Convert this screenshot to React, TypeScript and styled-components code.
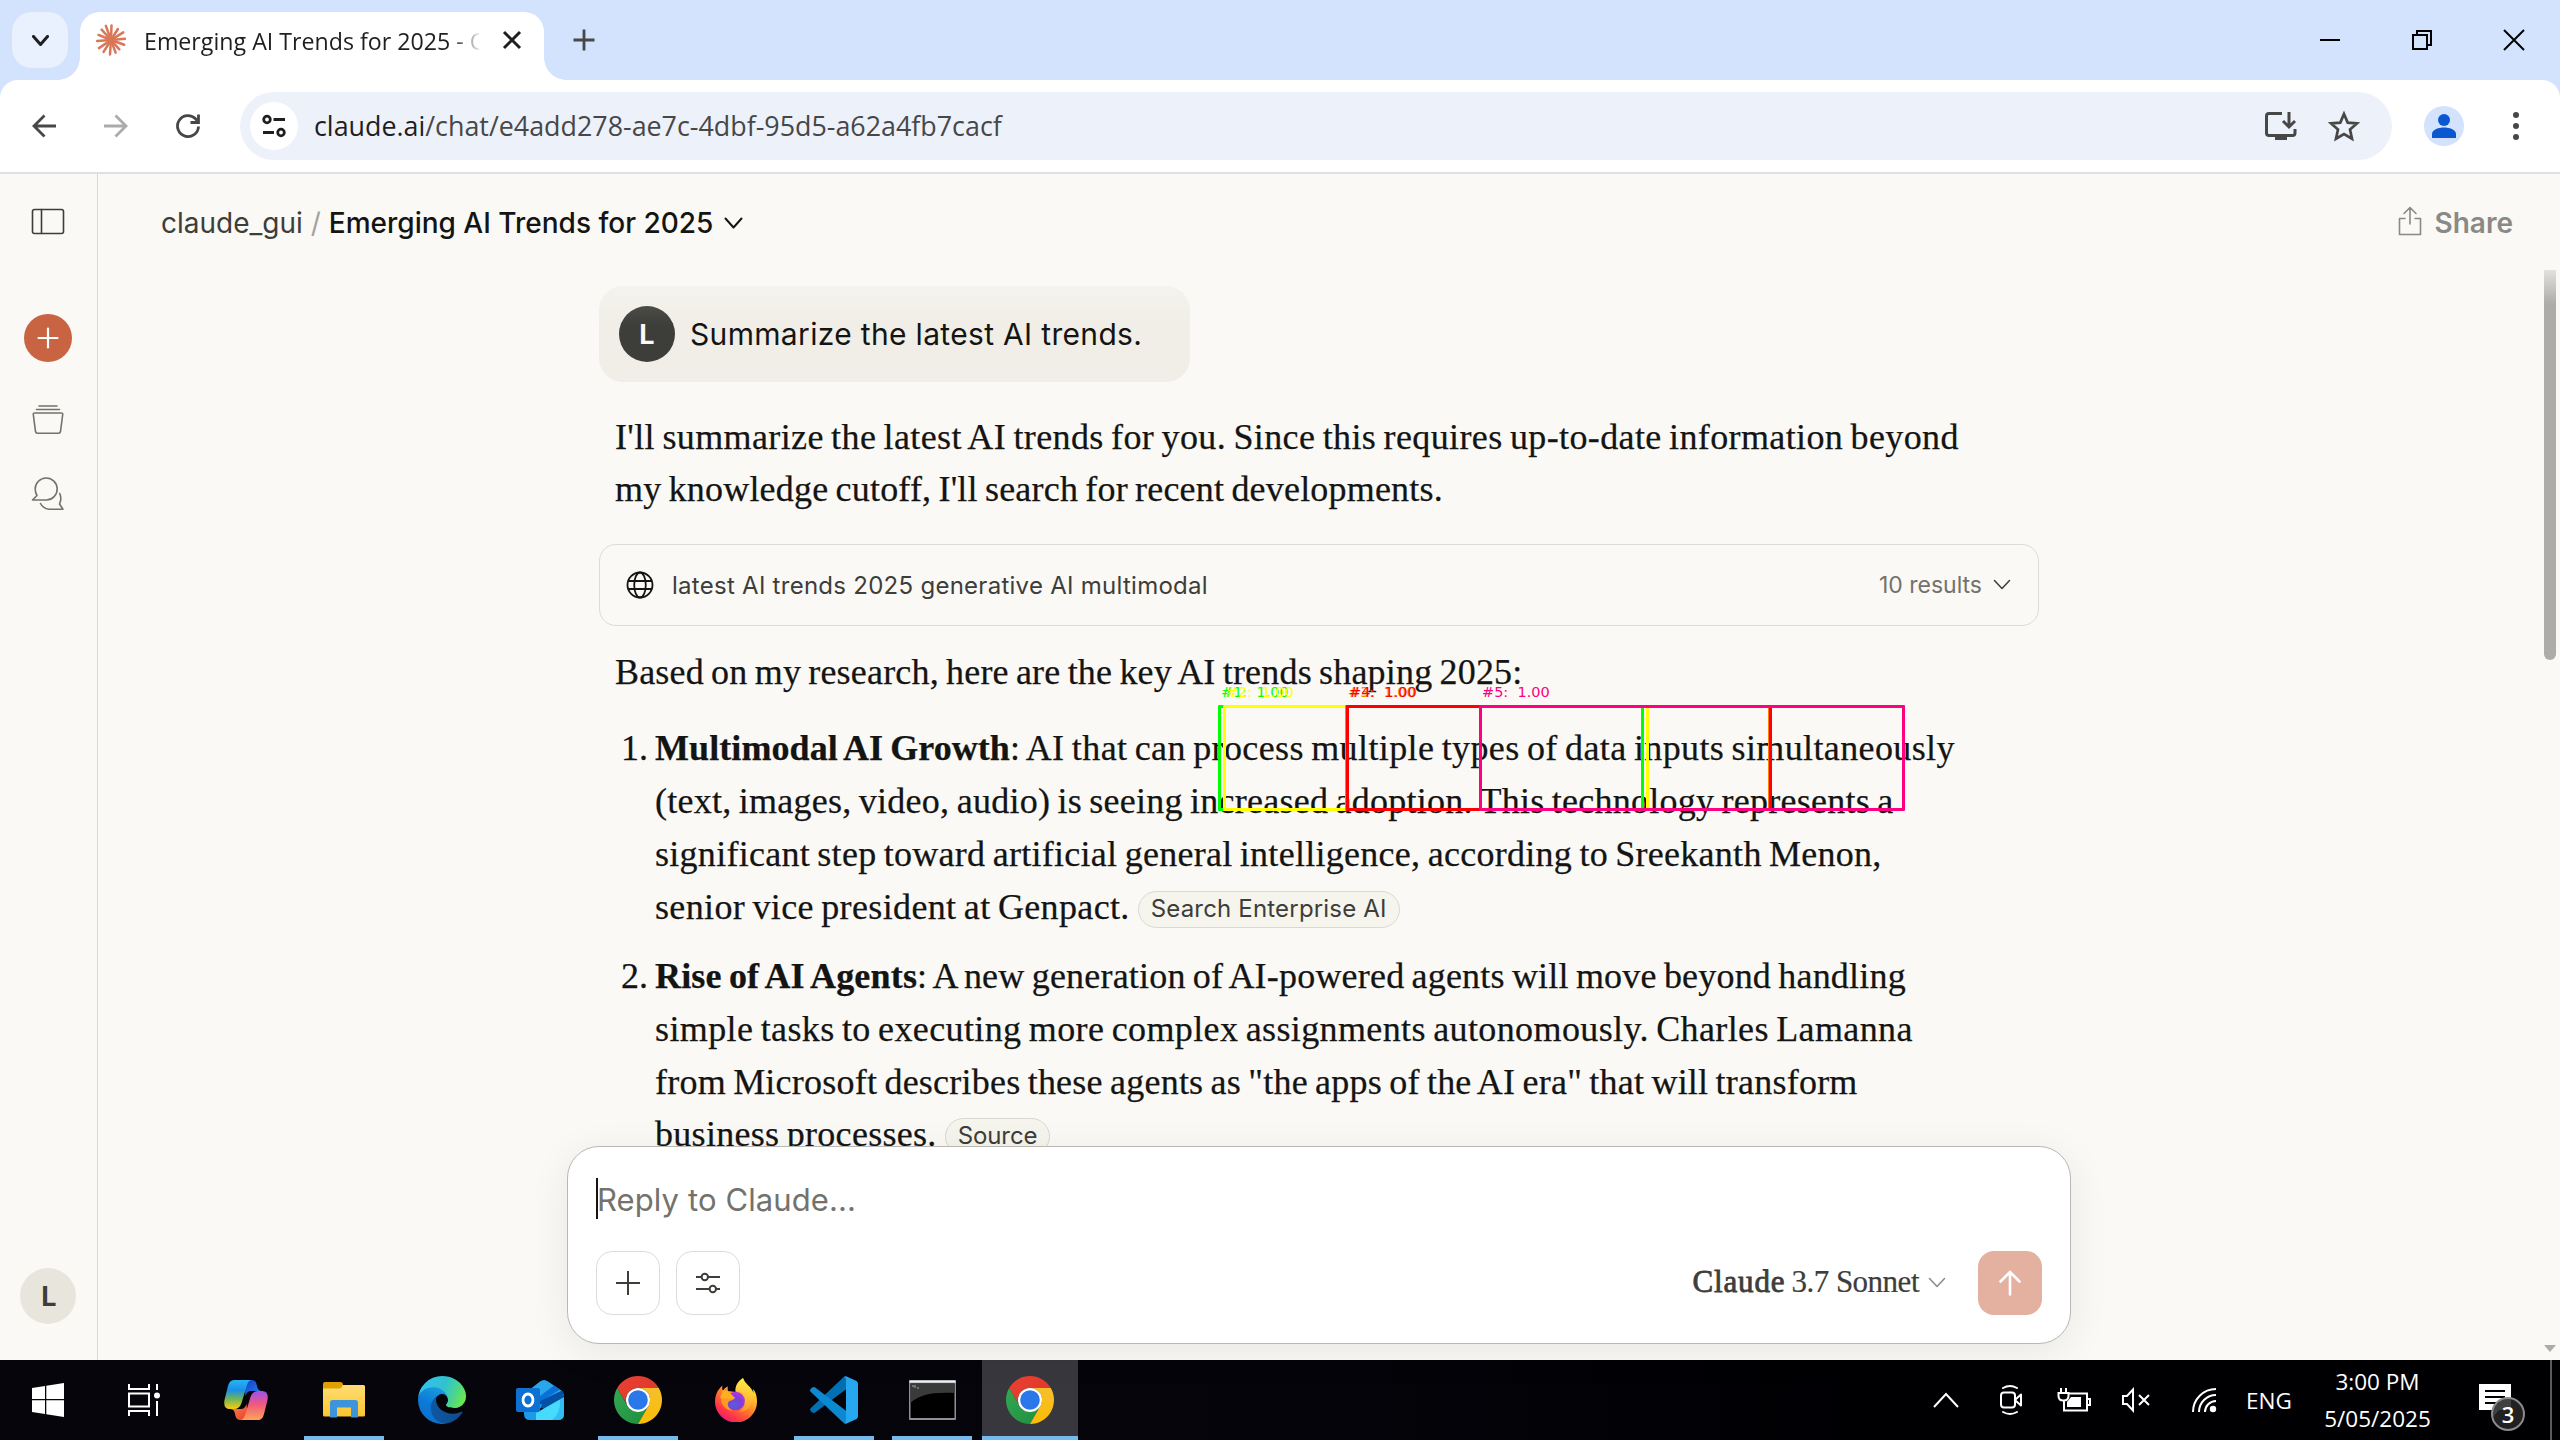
import React from 'react';
import styled, { createGlobalStyle, css } from 'styled-components';

const SANS = `Inter, "Liberation Sans", sans-serif`;
const SERIF = `"Liberation Serif", serif`;
const SYSTEM = `"Open Sans", "Noto Sans", sans-serif`;

const GlobalStyle = createGlobalStyle`
  *, *::before, *::after { box-sizing: border-box; }
  html, body { margin: 0; padding: 0; overflow: hidden; }
  svg { display: block; flex: none; }
`;

const Screen = styled.div`
  position: relative;
  width: 2560px;
  height: 1440px;
  display: grid;
  grid-template-rows: 80px 94px minmax(0, 1fr) 80px;
  overflow: hidden;
  background: #faf9f5;
  font-family: ${SANS};
`;

/* ---------- browser tab strip ---------- */

const TabStrip = styled.header`
  display: flex;
  align-items: flex-start;
  padding: 12px 0 0 12px;
  background: #d3e3fd;
`;

const TabSearch = styled.button`
  display: grid;
  place-items: center;
  width: 56px;
  height: 56px;
  padding: 0;
  border: 0;
  border-radius: 20px;
  background: #e9f1fe;
`;

const Tab = styled.div`
  position: relative;
  display: flex;
  align-items: center;
  width: 464px;
  height: 68px;
  margin-left: 12px;
  padding: 0 22px 12px 15px;
  border-radius: 20px 20px 0 0;
  background: #fff;

  &::before,
  &::after {
    content: '';
    position: absolute;
    bottom: 0;
    width: 22px;
    height: 22px;
  }
  &::before {
    left: -22px;
    background: radial-gradient(circle at 0 0, transparent 21.5px, #fff 22px);
  }
  &::after {
    right: -22px;
    background: radial-gradient(circle at 100% 0, transparent 21.5px, #fff 22px);
  }
`;

const TabTitle = styled.span`
  width: 335px;
  margin: 1px 0 0 17px;
  overflow: hidden;
  white-space: nowrap;
  font: 400 23.2px/32px ${SYSTEM};
  color: #1f1f1f;
  mask-image: linear-gradient(90deg, #000 308px, transparent 338px);
`;

const TabClose = styled.span`
  margin-left: auto;
`;

const NewTab = styled.span`
  margin: 16px 0 0 28px;
`;

const WindowControls = styled.div`
  display: flex;
  gap: 68px;
  margin: 16px 34px 0 auto;
`;

/* ---------- browser toolbar ---------- */

const ToolbarBack = styled.div`
  background: #d3e3fd;
`;

const Toolbar = styled.div`
  display: flex;
  align-items: center;
  height: 94px;
  padding: 0 28px;
  border-bottom: 2px solid #e0e0e0;
  border-radius: 18px 18px 0 0;
  background: #fff;
`;

const NavButtons = styled.nav`
  display: flex;
  gap: 40px;
  width: 212px;
`;

const Omnibox = styled.div`
  display: flex;
  align-items: center;
  width: 2152px;
  height: 68px;
  padding: 0 30px 0 10px;
  border-radius: 34px;
  background: #ecf1fa;
`;

const SiteInfo = styled.div`
  display: grid;
  place-items: center;
  width: 48px;
  height: 48px;
  border-radius: 50%;
  background: #fff;
`;

const Url = styled.div`
  flex: 1;
  margin-left: 16px;
  font: 400 26.85px/40px ${SYSTEM};
  color: #474747;
  b { font-weight: 400; color: #1f1f1f; }
`;

const OmniActions = styled.div`
  display: flex;
  align-items: center;
  gap: 28px;
`;

const Profile = styled.div`
  display: grid;
  place-items: center;
  width: 40px;
  height: 40px;
  margin-left: 32px;
  border-radius: 50%;
  background: #d3e3fd;
`;

const Kebab = styled.div`
  display: grid;
  gap: 5px;
  margin-left: 49px;
  i { width: 6px; height: 6px; border-radius: 50%; background: #474747; }
`;

/* ---------- page shell ---------- */

const Page = styled.div`
  display: grid;
  grid-template-columns: 98px minmax(0, 1fr) 20px;
  min-height: 0;
  background: #faf9f5;
`;

const Rail = styled.aside`
  display: flex;
  flex-direction: column;
  align-items: center;
  padding: 33px 1px 36px 0;
  border-right: 1px solid #d9d8d3;
`;

const NewChat = styled.button`
  display: grid;
  place-items: center;
  width: 48px;
  height: 48px;
  margin: 77px 0 39px;
  padding: 0;
  border: 0;
  border-radius: 50%;
  background: #c96442;
`;

const RailIcon = styled.div`
  margin-bottom: 40px;
`;

const Avatar = styled.div<{ $dark?: boolean }>`
  display: grid;
  place-items: center;
  flex: none;
  width: 56px;
  height: 56px;
  border-radius: 50%;
  font: 700 27px/1 ${SANS};
  ${(p) => p.$dark
    ? css`background: linear-gradient(#4b4b47, #3d3d3a 35%); color: #faf9f5;`
    : css`background: #e8e6dc; color: #3d3d3a; margin-top: auto; padding-left: 2px;`}
`;

const Main = styled.main`
  display: flex;
  flex-direction: column;
  align-items: center;
  min-height: 0;
`;

const ChatHeader = styled.div`
  display: flex;
  align-items: center;
  align-self: stretch;
  height: 98px;
  flex: none;
  padding: 0 27px 0 63px;
  font: 400 28px/34px ${SANS};
`;

const Project = styled.span`color: #3d3d3a;`;
const Slash = styled.span`
  width: 26px;
  text-align: center;
  color: #a3a29d;
`;
const Title = styled.span`
  margin-right: 11px;
  font-weight: 500;
  color: #141413;
`;

const Share = styled.div`
  display: flex;
  align-items: center;
  gap: 13px;
  margin-left: auto;
  font-weight: 600;
  color: #8a8985;
  svg { margin-top: -4px; }
`;

const Conversation = styled.section`
  width: 1440px;
  flex: 1;
  min-height: 0;
  padding-top: 14px;
  overflow: hidden;
`;

const Prompt = styled.div`
  display: flex;
  align-items: center;
  gap: 15px;
  width: 591px;
  height: 96px;
  padding: 0 20px;
  border-radius: 24px;
  background: linear-gradient(#f4f3ed, #f0eee6 40%);
  font: 400 30px/40px ${SANS};
  letter-spacing: 0.33px;
  color: #141413;
`;

const Prose = styled.div<{ $top: number }>`
  margin-top: ${(p) => p.$top}px;
  padding-left: 16px;
  font: 400 36px/52.8px ${SERIF};
  word-spacing: -2px;
  color: #141413;
  -webkit-text-stroke: 0.25px #141413;
`;

const Line = styled.div<{ $ls?: number }>`
  white-space: nowrap;
  letter-spacing: ${(p) => p.$ls ?? 0}px;
`;

const Strong = styled.strong<{ $ls: number }>`
  font-weight: 700;
  letter-spacing: ${(p) => p.$ls}px;
`;

const SearchCard = styled.div`
  display: flex;
  align-items: center;
  height: 82px;
  margin-top: 27.5px;
  padding: 0 27px 0 26px;
  border: 1px solid #dcdbd6;
  border-radius: 17px;
`;

const Query = styled.span`
  flex: 1;
  margin: 2px 0 0 18px;
  font: 400 24px/32px ${SANS};
  letter-spacing: 0.27px;
  color: #3d3d3a;
`;

const ResultCount = styled.span`
  margin: 0 11px 0 0;
  font: 400 23px/32px ${SANS};
  color: #73726c;
`;

const Item = styled.div<{ $top: number }>`
  display: grid;
  grid-template-columns: 33px 1fr;
  column-gap: 7px;
  margin-top: ${(p) => p.$top}px;
`;

const Marker = styled.span`text-align: right;`;

const Chip = styled.span<{ $ls: number }>`
  display: inline-block;
  height: 37px;
  margin-left: 8px;
  padding: 0 12px;
  border: 1px solid #dad9d1;
  border-radius: 19px;
  background: #f5f4ed;
  font: 400 24px/34px ${SANS};
  letter-spacing: ${(p) => p.$ls}px;
  word-spacing: 0;
  vertical-align: 2px;
  color: #3d3d3a;
  -webkit-text-stroke: 0;
`;

/* ---------- composer ---------- */

const Composer = styled.form`
  position: relative;
  z-index: 1;
  display: flex;
  flex-direction: column;
  justify-content: space-between;
  flex: none;
  width: 1504px;
  height: 198px;
  margin-bottom: 16px;
  padding: 31px 28px 28px;
  border: 1px solid #b9b8b5;
  border-radius: 32px;
  background: #fff;
  box-shadow: 0 8px 40px rgba(0, 0, 0, 0.075);
`;

const Placeholder = styled.div`
  width: fit-content;
  height: 41px;
  border-left: 2px solid #141413;
  font: 400 31px/43px ${SANS};
  letter-spacing: 0.1px;
  text-indent: -1px;
  color: #73726c;
`;

const ComposerRow = styled.div`
  display: flex;
  align-items: center;
  gap: 16px;
`;

const ToolButton = styled.button`
  display: grid;
  place-items: center;
  width: 64px;
  height: 64px;
  padding: 0;
  border: 1px solid #dddcd9;
  border-radius: 16px;
  background: #fff;
`;

const Model = styled.div`
  display: flex;
  align-items: center;
  margin: -2px 16px 0 auto;
  font: 400 31px/40px ${SERIF};
  color: #3d3d3a;
`;

const ModelBrand = styled.span`
  margin-right: 6px;
  letter-spacing: 0.85px;
  -webkit-text-stroke: 0.8px #3d3d3a;
`;

const ModelVersion = styled.span`
  margin-right: 9px;
  letter-spacing: -0.5px;
  -webkit-text-stroke: 0.2px #3d3d3a;
`;

const Send = styled.button`
  display: grid;
  place-items: center;
  width: 64px;
  height: 64px;
  padding: 0;
  border: 0;
  border-radius: 16px;
  background: #e4b0a0;
`;

/* ---------- scrollbar ---------- */

const Scrollbar = styled.div`
  display: flex;
  flex-direction: column;
  justify-content: space-between;
  padding: 96px 4px 8px;
`;

const Thumb = styled.div`
  height: 390px;
  border-radius: 0 0 6px 6px;
  background: linear-gradient(#e2e1dd, #adaca8 34px);
`;

/* ---------- detection overlay ---------- */

const Detection = styled.div<{ $x: number; $color: string }>`
  position: absolute;
  z-index: 2;
  top: 705px;
  left: ${(p) => p.$x}px;
  width: 426px;
  height: 106px;
  border: 3px solid ${(p) => p.$color};
  border-radius: 1px;
`;

const DetectionLabel = styled.span<{ $x: number; $color: string }>`
  position: absolute;
  z-index: 2;
  top: 683px;
  left: ${(p) => p.$x + 3}px;
  white-space: pre;
  font: 400 14.5px/18px "DejaVu Sans", sans-serif;
  color: ${(p) => p.$color};
`;

/* ---------- taskbar ---------- */

const Taskbar = styled.footer`
  display: flex;
  background: linear-gradient(90deg, #06050b, #05040a 50%, #000003 75%);
`;

const Apps = styled.div`
  display: flex;
  gap: 2px;
  margin-left: 6px;
`;

const AppCell = styled.div<{ $open?: boolean; $active?: boolean }>`
  display: grid;
  grid-template-rows: 76px 4px;
  place-items: center;
  width: 96px;
  background: ${(p) => (p.$active ? '#38373d' : 'transparent')};

  &::after {
    content: '';
    width: ${(p) => (p.$active ? 96 : 80)}px;
    height: 4px;
    background: ${(p) => (p.$open || p.$active ? '#76b9ed' : 'transparent')};
  }
  svg { margin-top: 4px; }
`;

const Tray = styled.div`
  display: flex;
  align-items: center;
  margin-left: auto;
  color: #fff;
  font: 400 22.5px/37px ${SYSTEM};
`;

const TrayItem = styled.div<{ $w: number }>`
  display: grid;
  place-items: center;
  width: ${(p) => p.$w}px;
  text-align: center;
`;

const Notifications = styled.div`
  position: relative;
  width: 74px;
  height: 80px;
  padding: 24px 0 0 1px;
  border-right: 2px solid #5a5a5a;
`;

const Count = styled.span`
  position: absolute;
  top: 37px;
  left: 13px;
  display: grid;
  place-items: center;
  width: 34px;
  height: 34px;
  border: 2px solid #8b8b8b;
  border-radius: 50%;
  background: rgba(38, 38, 38, 0.88);
  font: 600 22px/1 ${SYSTEM};
`;

const PeekEdge = styled.div`width: 8px;`;

/* ---------- icons ---------- */

type StrokeProps = { w: number; h: number; color?: string; sw?: number; round?: boolean; children: React.ReactNode };
const Stroke = ({ w, h, color = '#3d3d3a', sw = 2, round, children }: StrokeProps) => (
  <svg width={w} height={h} viewBox={`0 0 ${w} ${h}`} fill="none" stroke={color} strokeWidth={sw}
    strokeLinecap={round ? 'round' : 'butt'} strokeLinejoin={round ? 'round' : 'miter'}>{children}</svg>
);

const Burst = () => (
  <svg width="32" height="32" viewBox="-16 -16 32 32" stroke="#d97757" strokeWidth="2.5" strokeLinecap="round">
    {[[2, 14.5], [32, 13], [58, 14.5], [85, 14], [110, 14], [138, 12.5], [160, 13.5], [184, 14.5], [212, 14], [236, 14.5], [266, 14], [292, 13.5], [318, 14], [340, 15]].map(([a, r]) => (
      <line key={a} x1="0" y1="0" x2={Math.sin((a * Math.PI) / 180) * r} y2={-Math.cos((a * Math.PI) / 180) * r} />
    ))}
  </svg>
);

const Chevron = ({ w, h, color, sw }: { w: number; h: number; color: string; sw: number }) => (
  <Stroke w={w} h={h} color={color} sw={sw} round><path d={`M1.5 1.5 ${w / 2} ${h - 1.5} ${w - 1.5} 1.5`} /></Stroke>
);

const ChromeLogo = () => (
  <svg width="48" height="48" viewBox="0 0 48 48">
    <defs>
      <linearGradient id="cr" x1="0" y1="0" x2="1" y2="1"><stop stopColor="#ea4335" /><stop offset="1" stopColor="#dc3226" /></linearGradient>
      <linearGradient id="cg" x1="0" y1="0" x2="1" y2="1"><stop stopColor="#34a853" /><stop offset="1" stopColor="#1e8e3e" /></linearGradient>
      <linearGradient id="cy" x1="0" y1="0" x2="0" y2="1"><stop stopColor="#f5bf2c" /><stop offset="1" stopColor="#fbbc04" /></linearGradient>
    </defs>
    <path fill="url(#cr)" d="M24 12H44.78A24 24 0 0 0 3.215 12L13.6 30A12 12 0 0 1 24 12Z" />
    <path fill="url(#cg)" d="M13.608 30 3.218 12A24 24 0 0 0 24 48L34.398 30A12 12 0 0 1 13.608 30Z" />
    <path fill="url(#cy)" d="M34.39 30 24 48A24 24 0 0 0 44.78 12H24A12 12 0 0 1 34.39 30Z" />
    <circle cx="24" cy="24" r="12" fill="#fff" />
    <circle cx="24" cy="24" r="9.8" fill="#2a77ea" />
  </svg>
);

const EdgeLogo = () => (
  <svg width="48" height="48" viewBox="0 0 256 256">
    <defs>
      <linearGradient id="e1" x1="0" x2="1"><stop stopColor="#0c59a4" /><stop offset="1" stopColor="#114a8b" /></linearGradient>
      <linearGradient id="e2" x1=".6" y1="0" x2=".3" y2="1"><stop stopColor="#1b9de2" /><stop offset=".5" stopColor="#0b7ad6" /><stop offset="1" stopColor="#0a6fd0" /></linearGradient>
      <linearGradient id="e3" x1="0" y1=".3" x2="1" y2=".6"><stop stopColor="#35c1f1" /><stop offset=".5" stopColor="#2fc2cf" /><stop offset=".8" stopColor="#4fd787" /><stop offset="1" stopColor="#6be94e" /></linearGradient>
    </defs>
    <path fill="url(#e1)" d="M231 190.5c-3.4 1.8-6.9 3.4-10.5 4.7a101.9 101.9 0 0 1-35.9 6.4c-47.3 0-88.5-32.5-88.5-74.3 0-11.4 6.4-21.9 16.4-27.3-42.8 1.8-53.8 46.4-53.8 72.5 0 73.9 68.1 81.4 82.8 81.4 7.9 0 19.8-2.3 27-4.6l1.3-.4a128.3 128.3 0 0 0 66.6-52.8 4 4 0 0 0-1.2-5.6c-1.3-.8-2.9-.8-4.2 0z" />
    <path fill="url(#e2)" d="M105.7 241.4A79.2 79.2 0 0 1 83 220.1a80.7 80.7 0 0 1 29.5-120.1c3.2-1.5 8.5-4.2 15.6-4a32.4 32.4 0 0 1 25.7 13 31.9 31.9 0 0 1 6.3 18.7c0-.2 24.5-79.6-80-79.6-43.9 0-80 41.6-80 78.2a130.2 130.2 0 0 0 12.1 56 128 128 0 0 0 156.4 67.1 75.5 75.5 0 0 1-62.8-8z" />
    <path fill="url(#e3)" d="M152.3 148.9c-.8 1-3.3 2.5-3.3 5.6 0 2.6 1.7 5.1 4.7 7.2 14.4 10 41.5 8.7 41.6 8.7a59.6 59.6 0 0 0 30.3-8.3A61.4 61.4 0 0 0 256 109.2c.3-22.4-8-37.3-11.3-43.9C223.5 23.8 177.7 0 128 0A128 128 0 0 0 0 126.2C.5 89.7 36.8 60.1 80 60.1c3.5 0 23.5.4 42 10.1 16.3 8.6 24.9 19 30.8 29.2 6.2 10.7 7.3 24.2 7.3 29.5s-2.7 13.4-7.8 20z" />
  </svg>
);

const FolderLogo = () => (
  <svg width="42" height="36" viewBox="0 0 42 36">
    <defs><linearGradient id="fo" x1="0" y1="0" x2="0" y2="1"><stop stopColor="#ffdc74" /><stop offset="1" stopColor="#fdc52f" /></linearGradient></defs>
    <path fill="#dfa000" d="M0 2Q0 0 2 0H17Q20 0 20 3V8H0Z" />
    <path fill="url(#fo)" d="M0 6.5H16Q18.5 6.5 20 3H40.5Q42 3 42 4.5V33Q42 34.5 40.5 34.5H1.5Q0 34.5 0 33Z" />
    <path fill="#3d94db" d="M7 35.5V20.5Q7 18 9.5 18H32.5Q35 18 35 20.5V35.5H28V25.5H14V35.5Z" />
  </svg>
);

const CopilotLogo = () => (
  <svg width="44" height="40" viewBox="0 0 44 40">
    <defs>
      <linearGradient id="p1" x1="0" y1="0" x2="0" y2="1"><stop stopColor="#26b4f4" /><stop offset=".35" stopColor="#1c8fe6" /><stop offset=".65" stopColor="#6fb45a" /><stop offset="1" stopColor="#fccb10" /></linearGradient>
      <linearGradient id="p2" x1="0" y1="0" x2="0" y2="1"><stop stopColor="#9b52ee" /><stop offset=".45" stopColor="#f0577f" /><stop offset="1" stopColor="#fda457" /></linearGradient>
      <linearGradient id="p3" x1="0" y1="0" x2="1" y2="1"><stop stopColor="#0d3ec8" /><stop offset="1" stopColor="#2f85f0" /></linearGradient>
      <linearGradient id="p4" x1="0" y1="0" x2="1" y2="1"><stop stopColor="#fb8a4a" /><stop offset="1" stopColor="#ea3a2e" /></linearGradient>
    </defs>
    <path fill="url(#p3)" d="M20 0H28Q31.5 0 32.5 4L33.5 8Q34.5 11 38 11H27Q23 11 21.5 16Z" />
    <path fill="url(#p4)" d="M24 40H16Q12.5 40 11.5 36L10.5 32Q9.5 29 6 29H17Q21 29 22.5 24Z" />
    <path fill="url(#p1)" d="M10 0H28Q24.5 0 23 5L17.5 23Q15.5 29 10 29H6Q-1 29 .5 20L4 6Q5.5 0 10 0Z" />
    <path fill="url(#p2)" d="M34 40H16Q19.5 40 21 35L26.5 17Q28.5 11 34 11H38Q45 11 43.5 20L40 34Q38.5 40 34 40Z" />
  </svg>
);

const OutlookLogo = () => (
  <svg width="48" height="40" viewBox="0 0 48 40">
    <path fill="#28a8ea" d="M8 14 24 1.5Q28 -1.5 32 1.5L46 11Q48 13 48 16L24 28 8 24Z" />
    <path fill="#0a6fd6" d="M24 16 38 5.5 44 9.5 24 22Z" />
    <path fill="#0350a4" d="M24 21 46 10.5Q48.5 14 47 17.5L28 29 22 26Z" />
    <path fill="#1c9bea" d="M8 24H26L20 40H14Q8 40 8 34Z" />
    <path fill="#46dafc" d="M48 17V34Q48 40 42 40H20V33Z" />
    <path fill="#22a6ea" d="M48 17V34Q48 40 42 40H36Q45 33 44 19.5Z" opacity=".55" />
    <rect y="8" width="24" height="24" rx="2" fill="#0d70d2" />
    <ellipse cx="12" cy="20" rx="5" ry="6" fill="none" stroke="#fff" strokeWidth="2.8" />
  </svg>
);

const FirefoxLogo = () => (
  <svg width="42" height="44" viewBox="0 0 42 44">
    <defs>
      <linearGradient id="f1" x1=".85" y1="0" x2=".2" y2="1"><stop stopColor="#fff44f" /><stop offset=".3" stopColor="#ffc02e" /><stop offset=".55" stopColor="#ff7a2a" /><stop offset=".8" stopColor="#ff3647" /><stop offset="1" stopColor="#e31587" /></linearGradient>
      <radialGradient id="f2" cx=".4" cy=".7" r=".7"><stop stopColor="#5a5ce0" /><stop offset=".6" stopColor="#7d3fd6" /><stop offset="1" stopColor="#b833e1" /></radialGradient>
      <linearGradient id="f3" x1="0" y1="0" x2="0" y2="1"><stop stopColor="#fff04d" /><stop offset="1" stopColor="#ffa52a" /></linearGradient>
    </defs>
    <path fill="url(#f1)" d="M28 0C22 4 20 9 20.5 14L13 13C12.5 11 12.5 10 13 8.5 10.5 9.5 9 11 8 12.5 7 11 7 9.5 7.5 7.5 2 12 0 18 0 24A21 20.5 0 0 0 42 24C42 19 41 14 38 11L38.5 15C36 8 30 6 28 0Z" />
    <path fill="url(#f3)" d="M28 0C22 4 20 9 21 13 27 13 31 18 30 25 30 29 27 32 24 34 32 34 37 28 37 21 37 12 30 8 28 0Z" opacity=".7" />
    <circle cx="20.5" cy="23" r="9.3" fill="url(#f2)" />
    <path fill="#ff9a1f" d="M6 20C9 17 14 17 20 19.5 19 22.5 15 22 13.5 24 11.5 27 14 31 18 33 10 32 6 27 6 20Z" />
    <path fill="#ffae21" d="M8 12.5 13 13 17 17 20 20 12 21 5 20Z" />
  </svg>
);

const CodeLogo = () => (
  <svg width="48" height="48" viewBox="0 0 100 100">
    <path fill="#0070b3" d="M75 2V27.5L10 76.5Q7 78 4 75.5L1.3 73Q-1 70 1.3 67L69 3Z" />
    <path fill="#0b8ad2" d="M75 98V72.5L10 23.5Q7 22 4 24.5L1.3 27Q-1 30 1.3 33L69 97Z" />
    <path fill="#27a7ef" d="M75 .5 96 10Q100 12 100 16V84Q100 88 96 90L75 99.5Q72 100 69 97 75 99 75 93V7Q75 1 69 3 72 0 75 .5Z" />
  </svg>
);

const TerminalLogo = () => (
  <svg width="47" height="40" viewBox="0 0 47 40">
    <rect width="47" height="40" rx="1" fill="#8d9095" />
    <rect x=".5" y=".5" width="46" height="2.2" fill="#eceef0" />
    <rect x="1.5" y="3.5" width="44" height="34.5" fill="#000" />
    <path fill="#3a3a3a" d="M1.5 3.5H45.5V13C22 12 10 15 1.5 23Z" />
    <path stroke="#aaa" strokeWidth="1" d="M3 6h2M6 5v3M8 8h2" />
  </svg>
);

/* ---------- page ---------- */

const boxes: [string, number, string][] = [
  ['#1:  1.00', 1218, '#00ff00'],
  ['#2:  1.00', 1223, '#ffff00'],
  ['#3:  1.00', 1345, '#ff8000'],
  ['#4:  1.00', 1346, '#ff0000'],
  ['#5:  1.00', 1479, '#ff0080'],
];

export default function App() {
  return (
    <Screen>
      <GlobalStyle />
      <TabStrip>
        <TabSearch><Chevron w={17} h={11} color="#1f1f1f" sw={3} /></TabSearch>
        <Tab>
          <Burst />
          <TabTitle>Emerging AI Trends for 2025 - C</TabTitle>
          <TabClose><Stroke w={20} h={20} color="#1f1f1f" sw={3}><path d="M2 2 18 18M18 2 2 18" /></Stroke></TabClose>
        </Tab>
        <NewTab><Stroke w={24} h={24} color="#474747" sw={2.8}><path d="M12 1.5V22.5M1.5 12H22.5" /></Stroke></NewTab>
        <WindowControls>
          <Stroke w={24} h={24} color="#000"><path d="M2 12H22" /></Stroke>
          <Stroke w={24} h={24} color="#000"><path d="M3 7H17V21H3ZM7 7V3H21V17H17" /></Stroke>
          <Stroke w={24} h={24} color="#000"><path d="M2 2 22 22M22 2 2 22" /></Stroke>
        </WindowControls>
      </TabStrip>

      <ToolbarBack>
        <Toolbar>
          <NavButtons>
            <Stroke w={32} h={32} color="#474747" sw={2.8}><path d="M28 16H6M16.5 5.5 6 16 16.5 26.5" /></Stroke>
            <Stroke w={32} h={32} color="#ababab" sw={2.8}><path d="M4 16H26M15.5 5.5 26 16 15.5 26.5" /></Stroke>
            <Stroke w={32} h={32} color="#474747" sw={2.8}><path d="M26.5 16.5A10.5 10.5 0 1 1 23.5 8.7L26 11.5M26.5 4.5V12.5H18.5" /></Stroke>
          </NavButtons>
          <Omnibox>
            <SiteInfo>
              <Stroke w={26} h={26} color="#1f1f1f" sw={2.8}><circle cx="6" cy="6.5" r="3.3" /><path d="M12.5 6.5H24M2 19.5H13" /><circle cx="20" cy="19.5" r="3.3" /></Stroke>
            </SiteInfo>
            <Url><b>claude.ai</b>/chat/e4add278-ae7c-4dbf-95d5-a62a4fb7cacf</Url>
            <OmniActions>
              <Stroke w={36} h={32} color="#474747" sw={3}>
                <path d="M20 3.5H7Q4.5 3.5 4.5 6V23Q4.5 25.500 7 25.5H30.500Q33 25.5 33 23V19M27 2V16M21 11 27 17 33 11" />
                <path d="M13 28H25" strokeWidth="4" />
              </Stroke>
              <Stroke w={36} h={32} color="#474747" sw={2.7}>
                <path d="M18 4 21.7 12.6 31 13.4 24 19.6 26 28.7 18 24 10 28.7 12 19.6 5 13.4 14.3 12.6Z" />
              </Stroke>
            </OmniActions>
          </Omnibox>
          <Profile>
            <svg width="24" height="24" viewBox="0 0 24 24" fill="#0b57d0"><circle cx="12" cy="6" r="6" /><path d="M0 24V20C0 15.5 7 13.5 12 13.5S24 15.5 24 20V24Z" /></svg>
          </Profile>
          <Kebab><i /><i /><i /></Kebab>
        </Toolbar>
      </ToolbarBack>

      <Page>
        <Rail>
          <Stroke w={34} h={30} sw={1.6} round><rect x="1.5" y="2.5" width="31" height="24" rx="2" /><path d="M10.5 2.5V26.5" /></Stroke>
          <NewChat><Stroke w={22} h={22} color="#fff" sw={2.2} round><path d="M11 1.5V20.5M1.5 11H20.5" /></Stroke></NewChat>
          <RailIcon>
            <Stroke w={32} h={36} color="#73726c" sw={1.6} round>
              <path d="M7 5H25M4.5 8.5H27.5M2.5 12H29.5Q31 12 30.7 13.5L28.5 30.5Q28.2 32.3 26.5 32.3H5.5Q3.8 32.3 3.5 30.5L1.3 13.5Q1 12 2.5 12Z" />
            </Stroke>
          </RailIcon>
          <RailIcon>
            <Stroke w={34} h={34} color="#73726c" sw={1.6} round>
              <path d="M15.5 23H1.5L6 18.5Q4.2 15.5 4.2 12A11 11 0 1 1 15.5 23Z" />
              <path d="M28.7 16.5Q31 21.5 28.5 27L32 32.2H18Q12 31.5 9.5 26.5" />
            </Stroke>
          </RailIcon>
          <Avatar>L</Avatar>
        </Rail>

        <Main>
          <ChatHeader>
            <Project>claude_gui</Project>
            <Slash>/</Slash>
            <Title>Emerging AI Trends for 2025</Title>
            <Chevron w={19} h={12} color="#141413" sw={2} />
            <Share>
              <Stroke w={24} h={30} color="#8a8985" sw={1.6} round><path d="M7 12.5H1.5V28.5H22.5V12.5H17M12 18V1.5M6 7.5 12 1.5 18 7.5" /></Stroke>
              Share
            </Share>
          </ChatHeader>

          <Conversation>
            <Prompt><Avatar $dark>L</Avatar>Summarize the latest AI trends.</Prompt>
            <Prose $top={28.5}>
              <Line $ls={0.38}>I'll summarize the latest AI trends for you. Since this requires up-to-date information beyond</Line>
              <Line $ls={0.2}>my knowledge cutoff, I'll search for recent developments.</Line>
            </Prose>
            <SearchCard>
              <Stroke w={28} h={28} color="#141413" sw={1.8}>
                <circle cx="14" cy="14" r="12.5" /><ellipse cx="14" cy="14" rx="5.8" ry="12.5" /><path d="M2.3 10H25.7M2.3 18H25.7" />
              </Stroke>
              <Query>latest AI trends 2025 generative AI multimodal</Query>
              <ResultCount>10 results</ResultCount>
              <Chevron w={18} h={11} color="#3d3d3a" sw={1.5} />
            </SearchCard>
            <Prose $top={20.5}>
              <Line $ls={0.19}>Based on my research, here are the key AI trends shaping 2025:</Line>
              <Item $top={23.5}>
                <Marker>1.</Marker>
                <div>
                  <Line $ls={0.38}><Strong $ls={0.08}>Multimodal AI Growth</Strong>: AI that can process multiple types of data inputs simultaneously</Line>
                  <Line $ls={0.26}>(text, images, video, audio) is seeing increased adoption. This technology represents a</Line>
                  <Line $ls={0.28}>significant step toward artificial general intelligence, according to Sreekanth Menon,</Line>
                  <Line $ls={0.36}>senior vice president at Genpact.<Chip $ls={0.18}>Search Enterprise AI</Chip></Line>
                </div>
              </Item>
              <Item $top={16.5}>
                <Marker>2.</Marker>
                <div>
                  <Line $ls={0.2}><Strong $ls={0.18}>Rise of AI Agents</Strong>: A new generation of AI-powered agents will move beyond handling</Line>
                  <Line $ls={0.38}>simple tasks to executing more complex assignments autonomously. Charles Lamanna</Line>
                  <Line $ls={0.23}>from Microsoft describes these agents as "the apps of the AI era" that will transform</Line>
                  <Line $ls={0.3}>business processes.<Chip $ls={-0.1}>Source</Chip></Line>
                </div>
              </Item>
            </Prose>
          </Conversation>

          <Composer>
            <Placeholder>Reply to Claude...</Placeholder>
            <ComposerRow>
              <ToolButton type="button"><Stroke w={26} h={26} sw={2}><path d="M13 1V25M1 13H25" /></Stroke></ToolButton>
              <ToolButton type="button">
                <Stroke w={26} h={22} sw={2}><path d="M1 5H6.5M13 5H25M1 17H14.5M21 17H25" /><circle cx="9.8" cy="5" r="3.2" /><circle cx="17.8" cy="17" r="3.2" /></Stroke>
              </ToolButton>
              <Model>
                <ModelBrand>Claude</ModelBrand>
                <ModelVersion>3.7 Sonnet</ModelVersion>
                <Chevron w={18} h={11} color="#8a8985" sw={1.5} />
              </Model>
              <Send type="button"><Stroke w={24} h={28} color="#fff" sw={2.6} round><path d="M12 25.5V3M2.5 12.5 12 3 21.5 12.5" /></Stroke></Send>
            </ComposerRow>
          </Composer>
        </Main>

        <Scrollbar>
          <Thumb />
          <svg width="12" height="7" viewBox="0 0 12 7"><path fill="#adaca8" d="M0 0H12L6 7Z" /></svg>
        </Scrollbar>
      </Page>

      <Taskbar>
        <AppCell>
          <svg width="32" height="34" viewBox="0 0 32 34" fill="#fff"><path d="M0 5 13 3V16H0ZM14.3 2.8 32 0V16H14.3ZM0 17.3H13V31L0 29ZM14.3 17.3H32V34L14.3 31.2Z" /></svg>
        </AppCell>
        <AppCell>
          <Stroke w={32} h={32} color="#fff"><path d="M1 0V5H21V0M1 32V27H21V32M1 9.5H21V22.5H1ZM29 0V6M29 17V32" /><circle cx="29" cy="11.5" r="3" fill="#fff" stroke="none" /></Stroke>
        </AppCell>
        <Apps>
          <AppCell><CopilotLogo /></AppCell>
          <AppCell $open><FolderLogo /></AppCell>
          <AppCell><EdgeLogo /></AppCell>
          <AppCell><OutlookLogo /></AppCell>
          <AppCell $open><ChromeLogo /></AppCell>
          <AppCell><FirefoxLogo /></AppCell>
          <AppCell $open><CodeLogo /></AppCell>
          <AppCell $open><TerminalLogo /></AppCell>
          <AppCell $active><ChromeLogo /></AppCell>
        </Apps>
        <Tray>
          <TrayItem $w={64}><Stroke w={26} h={16} color="#fff"><path d="M1 15 13 2 25 15" /></Stroke></TrayItem>
          <TrayItem $w={66}>
            <Stroke w={24} h={32} color="#fff" sw={2} round><path d="M4 4Q11 0 18 4M4 28Q11 32 18 28" /><rect x="2" y="8.5" width="14" height="15" rx="3" /><path d="M17 15 22 10.5V21.5L17 17" /></Stroke>
          </TrayItem>
          <TrayItem $w={60}>
            <Stroke w={34} h={26} color="#fff"><path d="M12 6.5H30V23.5H7V14M30 12H33V18H30M4 1V6M9 1V6M1.5 6H11.5V9Q11.5 13.5 6.5 13.5T1.5 9Z" /><path fill="#fff" stroke="none" d="M14 10H24V20H10V15Z" /></Stroke>
          </TrayItem>
          <TrayItem $w={63}>
            <Stroke w={30} h={26} color="#fff"><path d="M2 9H6L12 2.5V23.5L6 17H2ZM18 8 28 18M28 8 18 18" /></Stroke>
          </TrayItem>
          <TrayItem $w={74}>
            <Stroke w={26} h={26} color="#fff"><path d="M2 25A23 23 0 0 1 25 2M8 25A17 17 0 0 1 25 8M14 25A11 11 0 0 1 25 14" /><circle cx="22" cy="22" r="3.2" fill="#fff" stroke="none" /></Stroke>
          </TrayItem>
          <TrayItem $w={56}>ENG</TrayItem>
          <TrayItem $w={161}><span>3:00 PM</span><span>5/05/2025</span></TrayItem>
          <TrayItem $w={20} />
          <Notifications>
            <svg width="32" height="34" viewBox="0 0 32 34"><path fill="#fff" d="M0 0H32V26H20L14 33V26H0Z" /><path stroke="#000" strokeWidth="2" d="M6 7H26M6 13H26M6 19H20" /></svg>
            <Count>3</Count>
          </Notifications>
          <PeekEdge />
        </Tray>
      </Taskbar>

      {boxes.map(([label, x, color]) => <Detection key={label} $x={x} $color={color} />)}
      {boxes.map(([label, x, color]) => <DetectionLabel key={label} $x={x} $color={color}>{label}</DetectionLabel>)}
    </Screen>
  );
}
